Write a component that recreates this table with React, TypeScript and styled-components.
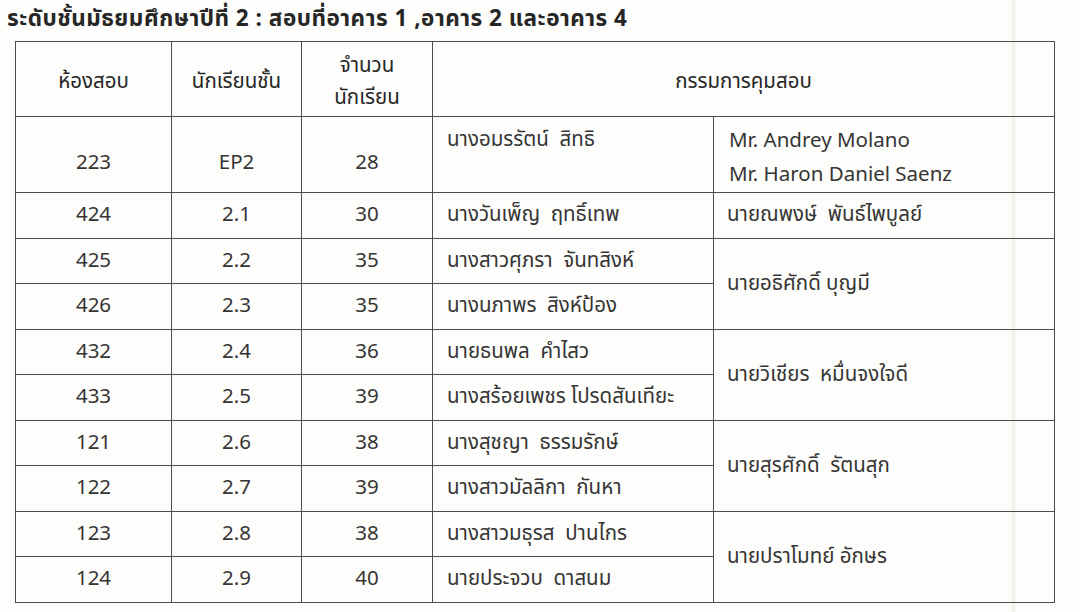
import React from "react";
import styled, { createGlobalStyle } from "styled-components";

const GlobalStyle = createGlobalStyle`
  html, body {
    margin: 0;
    padding: 0;
    background: #fdfdfb;
  }
  body {
    font-family: "Noto Sans Thai", "Noto Sans", "DejaVu Sans", sans-serif;
    color: #2e2e2e;
  }
`;

interface IRow {
  room: string;
  grade: string;
  count: string;
  teacher: string;
  proctor?: string[];
  span?: number;
  tall?: boolean;
}

const rows: IRow[] = [
  {
    room: "223",
    grade: "EP2",
    count: "28",
    teacher: "นางอมรรัตน์  สิทธิ",
    proctor: ["Mr. Andrey Molano", "Mr. Haron Daniel Saenz"],
    span: 1,
    tall: true,
  },
  { room: "424", grade: "2.1", count: "30", teacher: "นางวันเพ็ญ  ฤทธิ์เทพ", proctor: ["นายณพงษ์  พันธ์ไพบูลย์"], span: 1 },
  { room: "425", grade: "2.2", count: "35", teacher: "นางสาวศุภรา  จันทสิงห์", proctor: ["นายอธิศักดิ์ บุญมี"], span: 2 },
  { room: "426", grade: "2.3", count: "35", teacher: "นางนภาพร  สิงห์ป้อง" },
  { room: "432", grade: "2.4", count: "36", teacher: "นายธนพล  คำไสว", proctor: ["นายวิเชียร  หมื่นจงใจดี"], span: 2 },
  { room: "433", grade: "2.5", count: "39", teacher: "นางสร้อยเพชร โปรดสันเทียะ" },
  { room: "121", grade: "2.6", count: "38", teacher: "นางสุชญา  ธรรมรักษ์", proctor: ["นายสุรศักดิ์  รัตนสุก"], span: 2 },
  { room: "122", grade: "2.7", count: "39", teacher: "นางสาวมัลลิกา  กันหา" },
  { room: "123", grade: "2.8", count: "38", teacher: "นางสาวมธุรส  ปานไกร", proctor: ["นายปราโมทย์ อักษร"], span: 2 },
  { room: "124", grade: "2.9", count: "40", teacher: "นายประจวบ  ดาสนม" },
];

const App = (): JSX.Element => {
  return (
    <Page>
      <GlobalStyle />
      <Title>ระดับชั้นมัธยมศึกษาปีที่ 2 : สอบที่อาคาร 1 ,อาคาร 2 และอาคาร 4</Title>
      <Table>
        <colgroup>
          <col style={{ width: 156 }} />
          <col style={{ width: 130 }} />
          <col style={{ width: 131 }} />
          <col style={{ width: 281 }} />
          <col style={{ width: 341 }} />
        </colgroup>
        <thead>
          <HeadRow>
            <HeadCell>ห้องสอบ</HeadCell>
            <HeadCell>นักเรียนชั้น</HeadCell>
            <HeadCell>
              <Line>จำนวน</Line>
              <Line>นักเรียน</Line>
            </HeadCell>
            <HeadCell colSpan={2}>กรรมการคุมสอบ</HeadCell>
          </HeadRow>
        </thead>
        <tbody>
          {rows.map((r) => (
            <BodyRow key={r.room} $tall={r.tall}>
              <Cell $tall={r.tall}>{r.room}</Cell>
              <Cell $tall={r.tall}>{r.grade}</Cell>
              <Cell $tall={r.tall}>{r.count}</Cell>
              <NameCell $top={r.tall}>{r.teacher}</NameCell>
              {r.proctor && (
                <ProctorCell rowSpan={r.span} $tall={r.tall}>
                  {r.proctor.map((p) => (
                    <ProctorLine key={p} $spaced={r.proctor!.length > 1}>
                      {p}
                    </ProctorLine>
                  ))}
                </ProctorCell>
              )}
            </BodyRow>
          ))}
        </tbody>
      </Table>
    </Page>
  );
};

export default App;

const Page = styled.div`
  width: 1080px;
  height: 612px;
  padding: 4px 0 0 7px;
  box-sizing: border-box;
  overflow: hidden;
  background: linear-gradient(
    to right,
    transparent 1011px,
    #f5f2ec 1012px,
    #f5f2ec 1015px,
    transparent 1016px
  );
`;

const Title = styled.div`
  font-size: 22.5px;
  font-weight: 700;
  letter-spacing: 0.5px;
  line-height: 30px;
  color: #262626;
  height: 37px;
  white-space: nowrap;
`;

const Table = styled.table`
  margin-left: 8px;
  border-collapse: collapse;
  table-layout: fixed;
  width: 1039px;
  font-size: 20.5px;
  color: #353535;

  td,
  th {
    border: 1.5px solid #4d4d4d;
    padding: 0;
    white-space: pre;
  }
`;

const HeadRow = styled.tr`
  height: 75px;
`;

const HeadCell = styled.th`
  font-weight: 400;
  text-align: center;
  vertical-align: middle;
  line-height: 32px;
  color: #262626;
  padding-top: 6px !important;
`;

const Line = styled.div``;

const BodyRow = styled.tr<{ $tall?: boolean }>`
  height: ${(p) => (p.$tall ? "76px" : "45.5px")};
`;

const Cell = styled.td<{ $tall?: boolean }>`
  text-align: center;
  vertical-align: middle;
  line-height: 24px;
  padding-top: ${(p) => (p.$tall ? "16px" : "0")} !important;
`;

const NameCell = styled.td<{ $top?: boolean }>`
  text-align: left;
  vertical-align: ${(p) => (p.$top ? "top" : "middle")};
  padding: ${(p) => (p.$top ? "11px 0 0 14px" : "0 0 0 14px")} !important;
  line-height: 24px;
`;

const ProctorCell = styled.td<{ $tall?: boolean }>`
  text-align: left;
  vertical-align: ${(p) => (p.$tall ? "top" : "middle")};
  padding: ${(p) => (p.$tall ? "7px 0 0 15px" : "0 0 0 13px")} !important;
`;

const ProctorLine = styled.div<{ $spaced?: boolean }>`
  line-height: ${(p) => (p.$spaced ? "34px" : "24px")};
`;
